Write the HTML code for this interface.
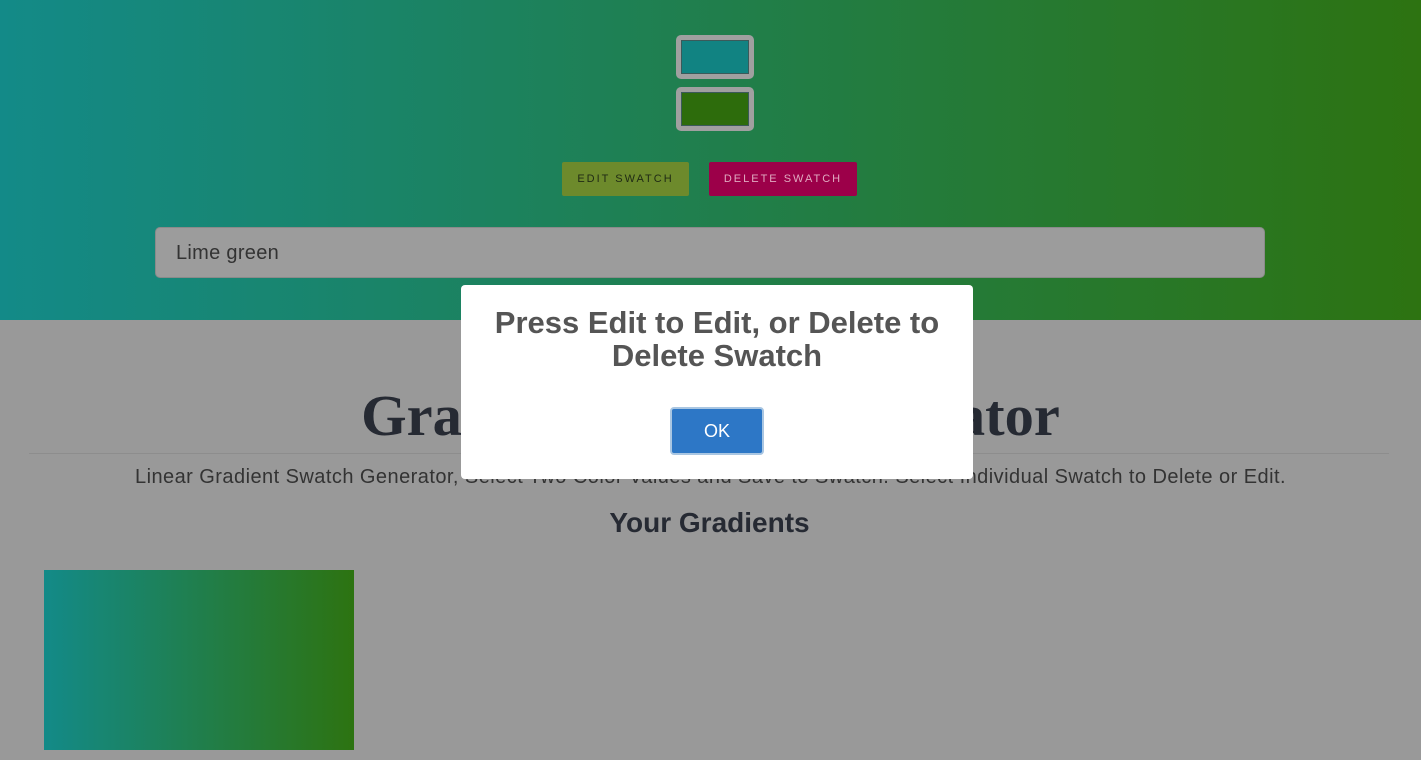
<!DOCTYPE html>
<html><head><style>
body{margin:0;width:1421px;height:760px;overflow:hidden;background:#999;font-family:"Liberation Sans",sans-serif;position:relative}
.hero{position:absolute;left:0;top:0;width:1421px;height:320px;background:linear-gradient(to right,#138a88,#2d7311)}
.sw{position:absolute;left:676px;width:68px;height:34px;border:5px solid #a0a0a0;border-radius:5px}
.sw i{display:block;margin:0;width:66px;height:32px;border:1px solid #3b5a5a}
.btn{position:absolute;top:162px;height:34px;line-height:34px;font-size:11px;letter-spacing:2px;text-align:center;border-radius:2px}
.inp{position:absolute;left:155px;top:227px;height:51px;background:#9c9c9c;border:1px solid #8a8a8a;border-radius:5px;font-size:20px;color:#333;line-height:51px;padding-left:20px;box-sizing:border-box;width:1110px;letter-spacing:0.3px}
h1{position:absolute;top:382px;left:0;width:1421px;margin:0;text-align:center;font-family:"Liberation Serif",serif;font-size:58.5px;color:#262a33;font-weight:bold}
.hr{position:absolute;top:453px;left:29px;width:1360px;border-top:1px solid #8d8d8d}
.sub{position:absolute;top:466px;left:0;width:1421px;text-align:center;font-size:20px;color:#333;letter-spacing:0.45px}
h2{position:absolute;top:507px;left:0;width:1419px;margin:0;text-align:center;font-size:28px;color:#262a33}
.card{position:absolute;left:44px;top:570px;width:310px;height:180px;background:linear-gradient(to right,#138a88,#2d7311)}
.modal{position:absolute;left:461px;top:285px;width:512px;height:194px;background:#fff;border-radius:4px}
.modal p{margin:21px 0 0;text-align:center;font-weight:bold;font-size:31px;line-height:33px;color:#555}
.ok{position:absolute;left:209px;top:122px;width:94px;height:48px;background:#2d77c6;border:2px solid #a9c6e2;border-radius:4px;color:#fff;font-size:18px;line-height:44px;text-align:center;box-sizing:border-box}
</style></head><body>
<div class="hero">
<div class="sw" style="top:35px;"><i style="background:#118382"></i></div>
<div class="sw" style="top:87px;"><i style="background:#2d6c0c"></i></div>
<div class="btn" style="left:562px;width:127px;background:#6d8a2c;color:#1f2a14">EDIT SWATCH</div>
<div class="btn" style="left:709px;width:148px;background:#9c0049;color:#e0a9c0">DELETE SWATCH</div>
<div class="inp">Lime green</div>
</div>
<h1>Gradient Swatch Generator</h1>
<div class="hr"></div>
<div class="sub">Linear Gradient Swatch Generator, Select Two Color Values and Save to Swatch. Select Individual Swatch to Delete or Edit.</div>
<h2>Your Gradients</h2>
<div class="card"></div>
<div class="modal"><p>Press Edit to Edit, or Delete to<br>Delete Swatch</p><div class="ok">OK</div></div>
</body></html>
